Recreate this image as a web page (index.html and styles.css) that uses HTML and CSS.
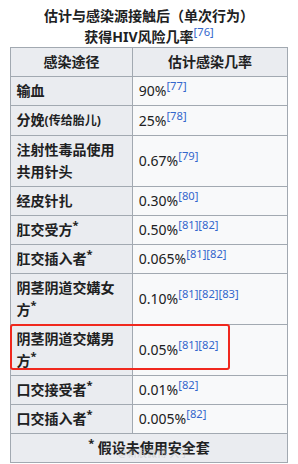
FILE: index.html
```html
<!DOCTYPE html>
<html lang="zh">
<head>
<meta charset="utf-8">
<link rel="stylesheet" href="styles.css">
</head>
<body>
<div class="wrap">
<table class="wikitable">
<caption>估计与感染源接触后（单次行为）<br>获得HIV风险几率<sup class="ref">[76]</sup></caption>
<thead>
<tr><th class="col1">感染途径</th><th class="col2">估计感染几率</th></tr>
</thead>
<tbody>
<tr><th class="rh">输血</th><td>90%<sup class="ref">[77]</sup></td></tr>
<tr><th class="rh">分娩<small>(传给胎儿)</small></th><td>25%<sup class="ref">[78]</sup></td></tr>
<tr><th class="rh">注射性毒品使用共用针头</th><td>0.67%<sup class="ref">[79]</sup></td></tr>
<tr><th class="rh">经皮针扎</th><td>0.30%<sup class="ref">[80]</sup></td></tr>
<tr><th class="rh">肛交受方<sup class="ast">*</sup></th><td>0.50%<sup class="ref">[81][82]</sup></td></tr>
<tr><th class="rh">肛交插入者<sup class="ast">*</sup></th><td>0.065%<sup class="ref">[81][82]</sup></td></tr>
<tr><th class="rh">阴茎阴道交媾女方<sup class="ast">*</sup></th><td>0.10%<sup class="ref">[81][82][83]</sup></td></tr>
<tr><th class="rh">阴茎阴道交媾男方<sup class="ast">*</sup></th><td>0.05%<sup class="ref">[81][82]</sup></td></tr>
<tr><th class="rh">口交接受者<sup class="ast">*</sup></th><td>0.01%<sup class="ref">[82]</sup></td></tr>
<tr><th class="rh">口交插入者<sup class="ast">*</sup></th><td>0.005%<sup class="ref">[82]</sup></td></tr>
<tr><th class="foot" colspan="2"><sup class="ast">*</sup> 假设未使用安全套</th></tr>
</tbody>
</table>
<div class="highlight"></div>
<div class="watermark">@新浪微博 大学</div>
</div>
</body>
</html>
```
FILE: styles.css
```css
html, body {
  margin: 0;
  padding: 0;
  background: #ffffff;
}
body {
  font-family: "Noto Sans", "Noto Sans CJK SC", sans-serif;
  font-size: 14px;
  color: #202122;
}
.wrap {
  position: relative;
  width: 298px;
  height: 464px;
  padding-top: 5px;
  box-sizing: border-box;
}
.wikitable {
  margin-left: 10px;
  width: 278px;
  border-collapse: collapse;
  border: 1px solid #a2a9b1;
  background: #f8f9fa;
  line-height: 22px;
}
.wikitable caption {
  font-weight: bold;
  line-height: 21px;
  text-align: center;
  color: #202122;
}
.wikitable th,
.wikitable td {
  border: 1px solid #a2a9b1;
  padding: 3px 5.6px;
}
.wikitable th {
  background: #eaecf0;
  font-weight: bold;
}
.col1 { width: 110px; text-align: center; }
.col2 { text-align: center; }
.rh { text-align: left; }
.rh small { font-size: 12px; }
.wikitable td {
  text-align: left;
}
.foot { text-align: center; }
sup {
  line-height: 1;
  vertical-align: super;
}
.ref {
  font-size: 11.2px;
  font-weight: normal;
  color: #3366cc;
}
.ast {
  font-size: 11.2px;
}
.highlight {
  position: absolute;
  left: 10px;
  top: 324px;
  width: 220px;
  height: 46px;
  border: 2px solid #f0281e;
  border-radius: 3px;
  box-sizing: border-box;
}
.watermark {
  position: absolute;
  left: 118px;
  top: 445px;
  font-size: 10px;
  color: rgba(180, 180, 180, 0.45);
}
```
